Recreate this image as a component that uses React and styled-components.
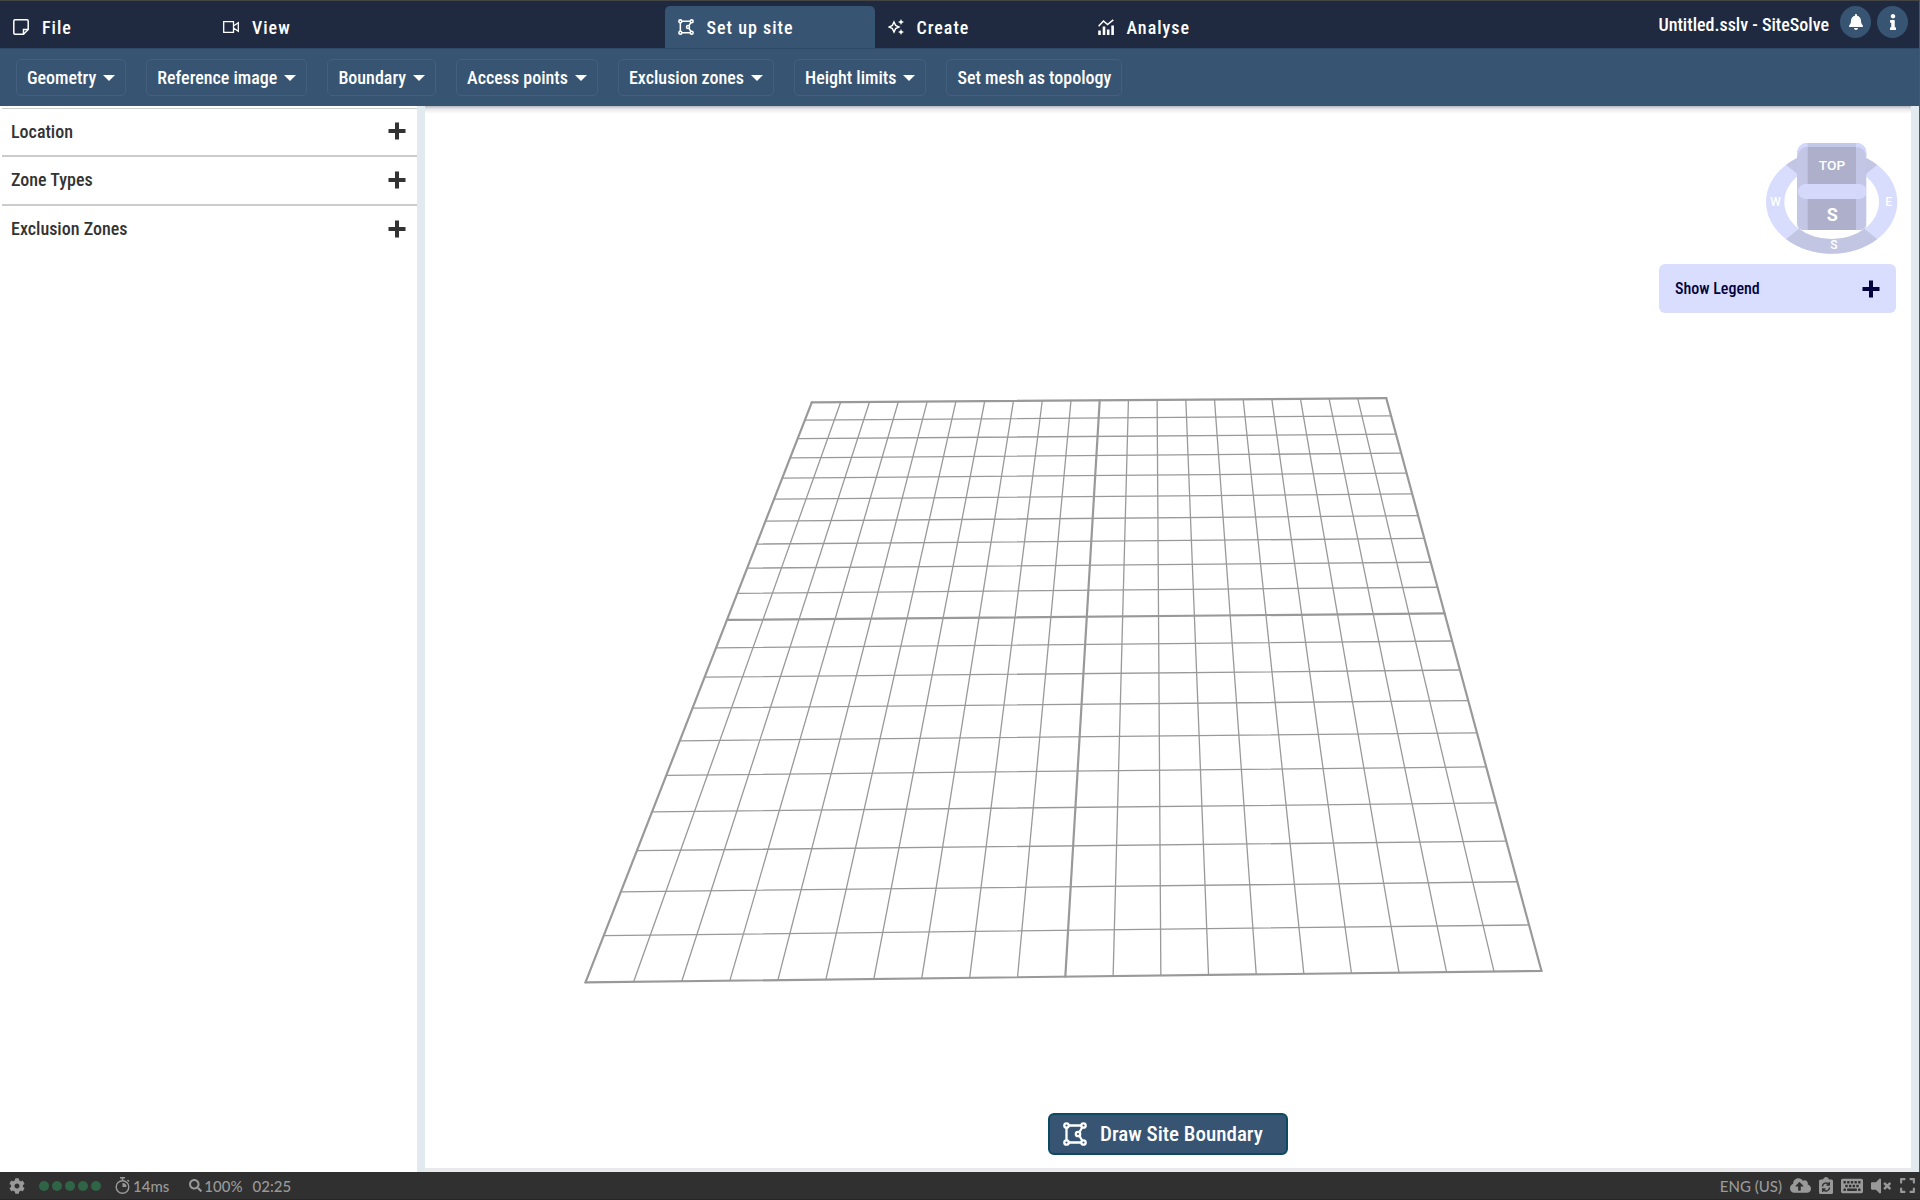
import React from "react";
import styled, { createGlobalStyle } from "styled-components";
import {
  FaBell,
  FaCog,
  FaSearch,
  FaCloudUploadAlt,
  FaKeyboard,
  FaVolumeMute,
  FaExpand,
  FaInfo,
} from "react-icons/fa";

const navy = "#1f2a40";
const steel = "#375573";

const GlobalStyle = createGlobalStyle`
  *, *::before, *::after { box-sizing: border-box; }
  body {
    margin: 0;
    background: #fff;
    font-family: "Roboto Condensed", Roboto, sans-serif;
    font-size: 18px;
    font-weight: 500;
  }
  button { font: inherit; color: inherit; cursor: pointer; }
`;

const Page = styled.div`
  display: flex;
  flex-direction: column;
  height: 100vh;
  overflow: hidden;
`;

const AppWindow = styled.div`
  flex: 1;
  min-height: 0;
  display: flex;
  flex-direction: column;
  border-top: 1px solid #444;
  border-right: 1px solid #555;
`;

const Header = styled.header`
  display: flex;
  justify-content: space-between;
  height: 47px;
  background: ${navy};
  color: #fff;
`;

const TabGroup = styled.nav`
  display: flex;
  align-items: flex-end;
`;

const Tab = styled.button`
  display: flex;
  align-items: center;
  gap: 13px;
  width: 210px;
  height: 42px;
  padding: 0 13px;
  border: 0;
  border-radius: 5px 5px 0 0;
  background: ${(p) => (p.$active ? steel : "transparent")};
  color: #fff;
  letter-spacing: 1px;
`;

const DocumentArea = styled.div`
  display: flex;
  justify-content: flex-end;
  gap: 6px;
  width: 380px;
  padding: 5px 11px 0 0;
`;

const DocumentTitle = styled.span`
  padding: 8px 5px 0 0;
  line-height: 21px;
  white-space: nowrap;
`;

const RoundButton = styled.button`
  display: grid;
  place-items: center;
  width: 31px;
  height: 32px;
  padding: 0;
  border: 0;
  border-radius: 50%;
  background: ${steel};
`;

const Toolbar = styled.div`
  display: flex;
  align-items: flex-start;
  gap: 20px;
  height: 58px;
  padding: 10px 16px;
  border-top: 1px solid #2f4a68;
  background: ${steel};
  color: #fff;
`;

const ToolButton = styled.button`
  display: flex;
  align-items: center;
  gap: 7px;
  height: 37px;
  padding: 0 10px;
  border: 1px solid #43617f;
  border-radius: 5px;
  background: transparent;
  white-space: nowrap;
`;

const Body = styled.div`
  flex: 1;
  min-height: 0;
  display: flex;
`;

const Sidebar = styled.aside`
  width: 417px;
  padding: 2px 0 0 2px;
  color: #333;
`;

const Section = styled.button`
  display: flex;
  align-items: center;
  justify-content: space-between;
  width: 100%;
  height: 49px;
  padding: 0 11px 2px 9px;
  border: 0;
  border-bottom: 2px solid ${(p) => (p.$last ? "transparent" : "#ccc")};
  border-top: ${(p) => (p.$first ? "1px solid #ccc" : "0")};
  background: transparent;
`;

const Stripe = styled.div`
  width: 8px;
  background: #e1eaee;
`;

const Viewport = styled.main`
  position: relative;
  flex: 1;
  min-width: 0;
  border-bottom: 4px solid #e9e9eb;
  background: linear-gradient(#b4b7bd, #e9e9ec 3px, #fff 8px);
`;

const Scene = styled.svg`
  display: block;
  width: 100%;
  height: 100%;
`;

const Overlay = styled.div`
  position: absolute;
  top: 34px;
  right: 15px;
  display: flex;
  flex-direction: column;
  align-items: flex-end;
  gap: 7px;
`;

const CompassSvg = styled.svg`
  width: 138px;
  height: 117px;
  margin-right: -5px;
  font-family: Roboto, sans-serif;
`;

const Legend = styled.button`
  display: flex;
  align-items: center;
  justify-content: space-between;
  width: 237px;
  height: 49px;
  padding: 0 16px;
  border: 0;
  border-radius: 6px;
  background: #dadefe;
  color: #03033f;
  font-size: 16px;
`;

const ActionBar = styled.div`
  position: absolute;
  left: 0;
  right: 0;
  bottom: 13px;
  display: flex;
  justify-content: center;
`;

const DrawButton = styled.button`
  display: flex;
  align-items: center;
  gap: 13px;
  width: 240px;
  height: 42px;
  padding: 0 13px;
  border: 2px solid #0d4a62;
  border-radius: 6px;
  background: ${steel};
  color: #fff;
  font-size: 21px;
  white-space: nowrap;
`;

const StatusBar = styled.footer`
  display: flex;
  align-items: center;
  justify-content: space-between;
  height: 28px;
  padding: 0 4px 0 9px;
  border-bottom: 1px solid #262626;
  background: #303030;
  color: #999;
  font-family: Lato, sans-serif;
  font-size: 15px;
`;

const StatusGroup = styled.div`
  display: flex;
  align-items: center;
  gap: ${(p) => p.$gap}px;
`;

const Dots = styled.div`
  display: flex;
  gap: 3px;
`;

const Dot = styled.i`
  width: 10px;
  height: 10px;
  border-radius: 50%;
  background: #2f6446;
`;

const Plus = () => (
  <svg width="18" height="18" viewBox="0 0 18 18" aria-hidden="true">
    <path d="M9 0.500V17.500M0.500 9H17.500" stroke="currentColor" strokeWidth="4" />
  </svg>
);

const Caret = () => (
  <svg width="12" height="6" viewBox="0 0 12 6" aria-hidden="true">
    <path d="M0 0H12L6 6Z" fill="currentColor" />
  </svg>
);

const iconProps = {
  fill: "none",
  stroke: "currentColor",
  strokeWidth: 1.5,
  viewBox: "0 0 16 16",
  "aria-hidden": true,
};

const FileIcon = () => (
  <svg width="16" height="16" {...iconProps}>
    <path d="M2 .8H14Q15.200 .8 15.200 2V10.500L10.500 15.200H2Q.8 15.200 .8 14V2Q.8 .8 2 .8Z" />
    <path d="M15.200 10.500H10.500V15.200" />
  </svg>
);

const CameraIcon = () => (
  <svg width="16" height="16" {...iconProps} strokeWidth="1.3">
    <path d="M.7 2.700H10.500V13.300H.7ZM10.500 7L15.300 3.800V12.200L10.500 9" />
  </svg>
);

const BoundaryIcon = ({ size }) => (
  <svg width={size} height={size} viewBox="0 0 24 24" fill="none" stroke="currentColor" strokeWidth="2.3" aria-hidden="true">
    <path d="M5.500 3.500H18.500M3.500 5.500V18.500M5.500 20.500H18.500M19.500 5L16.500 10M16.500 14L19.500 19" />
    <circle cx="3.500" cy="3.500" r="2.200" />
    <circle cx="20.500" cy="3.500" r="2.200" />
    <circle cx="3.500" cy="20.500" r="2.200" />
    <circle cx="20.500" cy="20.500" r="2.200" />
    <circle cx="15" cy="12" r="2.200" />
  </svg>
);

const CreateIcon = () => (
  <svg width="16" height="16" {...iconProps} strokeWidth="1.4">
    <path d="M6 3L7.600 6.400L11 8L7.600 9.600L6 13L4.400 9.600L1 8L4.400 6.400Z" />
    <path d="M13 0L13.900 2.100L16 3L13.900 3.900L13 6L12.100 3.900L10 3L12.100 2.100ZM13 10L13.900 12.100L16 13L13.900 13.900L13 16L12.100 13.900L10 13L12.100 12.100Z" fill="currentColor" stroke="none" />
  </svg>
);

const AnalyseIcon = () => (
  <svg width="16" height="16" {...iconProps}>
    <path d="M.6 7.200L5.500 2L9.500 5.500L15.300 .8" />
    <path d="M1.500 16V11.500M6 16V7.500M10.200 16V10.500M14.600 16V6.500" strokeWidth="2.600" />
  </svg>
);

const StopwatchIcon = () => (
  <svg width="15" height="17" viewBox="0 0 15 17" fill="none" stroke="currentColor" strokeWidth="1.400" aria-hidden="true">
    <circle cx="7.500" cy="10" r="6.300" />
    <path d="M7.500 1V4M5 .8H10M12.500 3L14 4.500" />
    <path d="M7.500 10V6A4 4 0 0 1 11.500 10Z" fill="currentColor" stroke="none" />
  </svg>
);

const ClipboardIcon = () => (
  <svg width="14" height="17" viewBox="0 0 14 17" aria-hidden="true">
    <path d="M1.500 2.500H4Q4.500 0 7 0T10 2.500H12.500Q14 2.500 14 4V15.500Q14 17 12.500 17H1.500Q0 17 0 15.500V4Q0 2.500 1.500 2.500Z" fill="currentColor" />
    <path d="M3.500 9.500A3.600 3.600 0 0 1 10 7.500M10.500 10.500A3.600 3.600 0 0 1 4 12.500M10.300 5V8H7.500M3.700 15V12H6.500" fill="none" stroke="#303030" strokeWidth="1.300" />
  </svg>
);

/* Ground plane corners, in scene units */
const corners = {
  tl: [811.8, 402.4],
  tr: [1386.3, 398.2],
  br: [1541.5, 971],
  bl: [585.5, 982.4],
};

/* Projective map from the unit square onto the four corners */
function makeProjection({ tl, tr, br, bl }) {
  const sx = tl[0] - tr[0] + br[0] - bl[0];
  const sy = tl[1] - tr[1] + br[1] - bl[1];
  const dx1 = tr[0] - br[0];
  const dx2 = bl[0] - br[0];
  const dy1 = tr[1] - br[1];
  const dy2 = bl[1] - br[1];
  const det = dx1 * dy2 - dx2 * dy1;
  const g = (sx * dy2 - dx2 * sy) / det;
  const h = (dx1 * sy - sx * dy1) / det;
  return (u, v) => {
    const w = g * u + h * v + 1;
    return [
      ((tr[0] - tl[0] + g * tr[0]) * u + (bl[0] - tl[0] + h * bl[0]) * v + tl[0]) / w,
      ((tr[1] - tl[1] + g * tr[1]) * u + (bl[1] - tl[1] + h * bl[1]) * v + tl[1]) / w,
    ];
  };
}

const project = makeProjection(corners);
const steps = Array.from({ length: 21 }, (_, i) => i);

const GridLine = ({ from, to, major }) => {
  const [x1, y1] = project(...from);
  const [x2, y2] = project(...to);
  return <line x1={x1} y1={y1} x2={x2} y2={y2} strokeWidth={major ? 2.2 : 1.3} />;
};

const GroundGrid = () => (
  <Scene viewBox="425 106 1486 1062" role="img" aria-label="Site grid">
    <g stroke="#999" strokeLinecap="round">
      {steps.map((i) => (
        <React.Fragment key={i}>
          <GridLine from={[i / 20, 0]} to={[i / 20, 1]} major={i % 10 === 0} />
          <GridLine from={[0, i / 20]} to={[1, i / 20]} major={i % 10 === 0} />
        </React.Fragment>
      ))}
    </g>
  </Scene>
);

const Compass = () => (
  <CompassSvg viewBox="490 420 414 351" role="img" aria-label="View cube">
    <defs>
      <clipPath id="poles">
        <path d="M696 606L500 446V420H892V446ZM696 606L500 766V790H892V766Z" />
      </clipPath>
      <clipPath id="cube">
        <rect x="592" y="429" width="209" height="240" rx="30" />
        <rect x="592" y="600" width="209" height="90" rx="18" />
      </clipPath>
    </defs>
    <ellipse cx="696" cy="606" rx="197" ry="155" fill="#d8ddfe" />
    <g clipPath="url(#poles)">
      <ellipse cx="696" cy="606" rx="197" ry="155" fill="#c3c6e3" />
    </g>
    <ellipse cx="696" cy="606" rx="142" ry="111" fill="#fff" />
    <g clipPath="url(#cube)">
      <rect x="592" y="429" width="209" height="261" fill="#c3c6e4" />
      <path d="M592 470V429H801V470Q795 441 768 441H624Q598 441 592 470Z" fill="#d2d7fb" />
      <rect x="624" y="429" width="145" height="12" fill="#c3c7e8" />
      <rect x="624" y="441" width="145" height="250" fill="#aeb0cb" />
      <rect x="624" y="552" width="145" height="45" fill="#c5c9e7" />
      <rect x="595" y="552" width="206" height="45" rx="22" fill="#d4d8fb" />
    </g>
    <g fill="#fff" textAnchor="middle" fontWeight="500">
      <text x="697" y="510" fontSize="41">TOP</text>
      <text x="698" y="662" fontSize="54" fontWeight="700">S</text>
      <text x="703" y="746" fontSize="36">S</text>
      <text x="528" y="619" fontSize="36">W</text>
      <text x="867" y="617" fontSize="36">E</text>
    </g>
  </CompassSvg>
);

const tools = [
  ["Geometry", true],
  ["Reference image", true],
  ["Boundary", true],
  ["Access points", true],
  ["Exclusion zones", true],
  ["Height limits", true],
  ["Set mesh as topology", false],
];

const sections = ["Location", "Zone Types", "Exclusion Zones"];

export default function App() {
  return (
    <Page>
      <GlobalStyle />
      <AppWindow>
        <Header>
          <TabGroup>
            <Tab><FileIcon />File</Tab>
            <Tab><CameraIcon />View</Tab>
          </TabGroup>
          <TabGroup>
            <Tab $active><BoundaryIcon size={16} />Set up site</Tab>
            <Tab><CreateIcon />Create</Tab>
            <Tab><AnalyseIcon />Analyse</Tab>
          </TabGroup>
          <DocumentArea>
            <DocumentTitle>Untitled.sslv - SiteSolve</DocumentTitle>
            <RoundButton aria-label="Notifications"><FaBell size={16} /></RoundButton>
            <RoundButton aria-label="Information"><FaInfo size={16} /></RoundButton>
          </DocumentArea>
        </Header>
        <Toolbar>
          {tools.map(([label, menu]) => (
            <ToolButton key={label}>
              {label}
              {menu && <Caret />}
            </ToolButton>
          ))}
        </Toolbar>
        <Body>
          <Sidebar>
            {sections.map((label, i) => (
              <Section key={label} $first={i === 0} $last={i === sections.length - 1}>
                {label}
                <Plus />
              </Section>
            ))}
          </Sidebar>
          <Stripe />
          <Viewport>
            <GroundGrid />
            <Overlay>
              <Compass />
              <Legend>
                Show Legend
                <Plus />
              </Legend>
            </Overlay>
            <ActionBar>
              <DrawButton><BoundaryIcon size={24} />Draw Site Boundary</DrawButton>
            </ActionBar>
          </Viewport>
          <Stripe />
        </Body>
      </AppWindow>
      <StatusBar>
        <StatusGroup $gap={20}>
          <StatusGroup $gap={14}>
            <FaCog size={16} />
            <Dots>{[0, 1, 2, 3, 4].map((i) => <Dot key={i} />)}</Dots>
            <StatusGroup $gap={3}><StopwatchIcon />14ms</StatusGroup>
          </StatusGroup>
          <StatusGroup $gap={10}>
            <StatusGroup $gap={2}><FaSearch size={13} />100%</StatusGroup>
            <span>02:25</span>
          </StatusGroup>
        </StatusGroup>
        <StatusGroup $gap={8}>
          <span>ENG (US)</span>
          <FaCloudUploadAlt size={21} />
          <ClipboardIcon />
          <FaKeyboard size={22} />
          <FaVolumeMute size={20} />
          <FaExpand size={17} />
        </StatusGroup>
      </StatusBar>
    </Page>
  );
}
